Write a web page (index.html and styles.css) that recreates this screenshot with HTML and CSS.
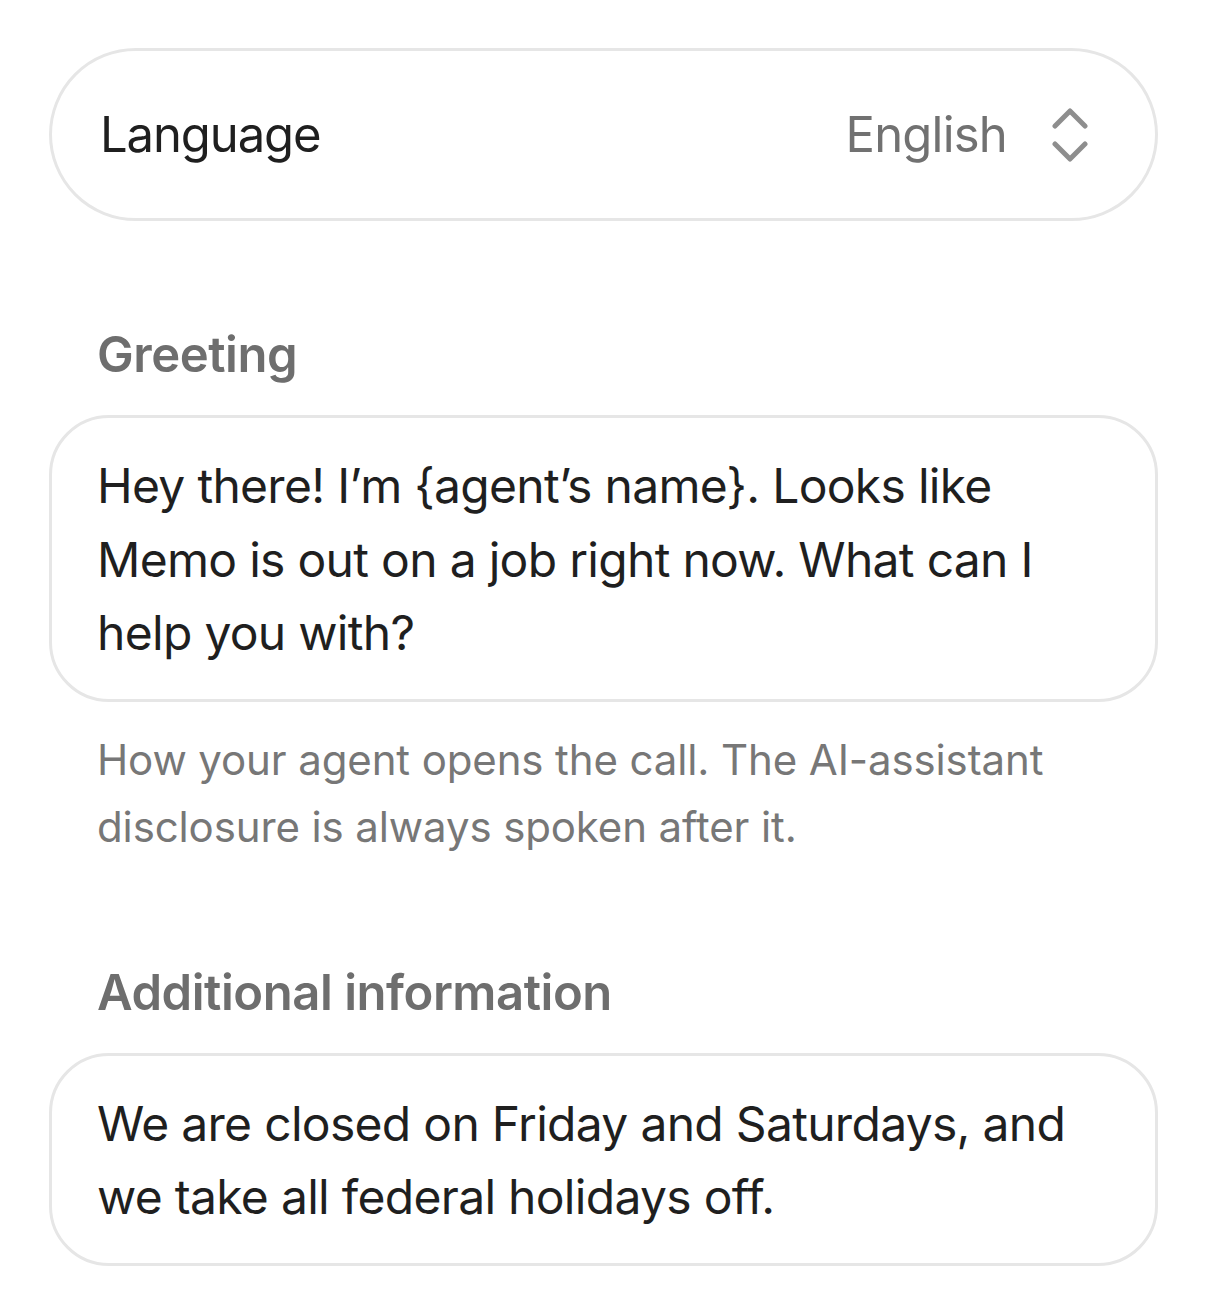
FILE: index.html
```html
<!DOCTYPE html>
<html lang="en">
<head>
<meta charset="utf-8">
<title>Agent settings</title>
<link rel="stylesheet" href="styles.css">
</head>
<body>
<main class="page">
  <div class="select-row">
    <span class="select-label">Language</span>
    <span class="select-value">
      <span class="select-text">English</span>
      <svg class="chevrons" viewBox="0 0 36 56" width="36" height="56" aria-hidden="true">
        <path d="M3 19 L18 4 L33 19" />
        <path d="M3 37 L18 52 L33 37" />
      </svg>
    </span>
  </div>

  <section class="field field-greeting">
    <h2 class="field-label">Greeting</h2>
    <div class="field-box">Hey there! I’m {agent’s name}. Looks like Memo is out on a job right now. What can I help you with?</div>
    <p class="field-hint">How your agent opens the call. The AI-assistant disclosure is always spoken after it.</p>
  </section>

  <section class="field field-additional">
    <h2 class="field-label">Additional information</h2>
    <div class="field-box">We are closed on Friday and Saturdays, and we take all federal holidays off.</div>
  </section>
</main>
</body>
</html>
```
FILE: styles.css
```css
* { box-sizing: border-box; }

html, body {
  margin: 0;
  padding: 0;
  background: #ffffff;
}

body {
  font-family: Inter, "Noto Sans", "Liberation Sans", sans-serif;
  color: #1f1f1f;
}

.page {
  padding: 48px 48px 0 49px;
  display: flex;
  flex-direction: column;
}

.select-row {
  height: 173px;
  border: 3px solid #e6e6e6;
  border-radius: 90px;
  display: flex;
  align-items: center;
  justify-content: space-between;
  padding: 0 67px 0 48px;
}

.select-label {
  font-size: 49px;
  line-height: 60px;
  letter-spacing: -1.1px;
  color: #1f1f1f;
}

.select-value {
  display: flex;
  align-items: center;
  gap: 45px;
}

.select-text {
  font-size: 49px;
  line-height: 60px;
  letter-spacing: -0.8px;
  color: #717171;
}

.chevrons {
  display: block;
  fill: none;
  stroke: #8e8e8e;
  stroke-width: 5;
  stroke-linecap: round;
  stroke-linejoin: round;
}

.field {
  display: flex;
  flex-direction: column;
}

.field-greeting { margin-top: 104px; }
.field-additional { margin-top: 103px; }

.field-label {
  margin: 0 0 30px 48px;
  font-size: 49px;
  line-height: 60px;
  font-weight: 600;
  letter-spacing: -0.45px;
  color: #6e6e6e;
}

.field-box {
  border: 3px solid #e6e6e6;
  border-radius: 60px;
  padding: 31px 45px 29px 45px;
  font-size: 48px;
  line-height: 73.5px;
  letter-spacing: -0.7px;
  color: #1f1f1f;
}

.field-hint {
  margin: 24px 0 0 48px;
  padding-right: 60px;
  font-size: 42px;
  line-height: 67px;
  letter-spacing: -0.12px;
  color: #777777;
}
```
